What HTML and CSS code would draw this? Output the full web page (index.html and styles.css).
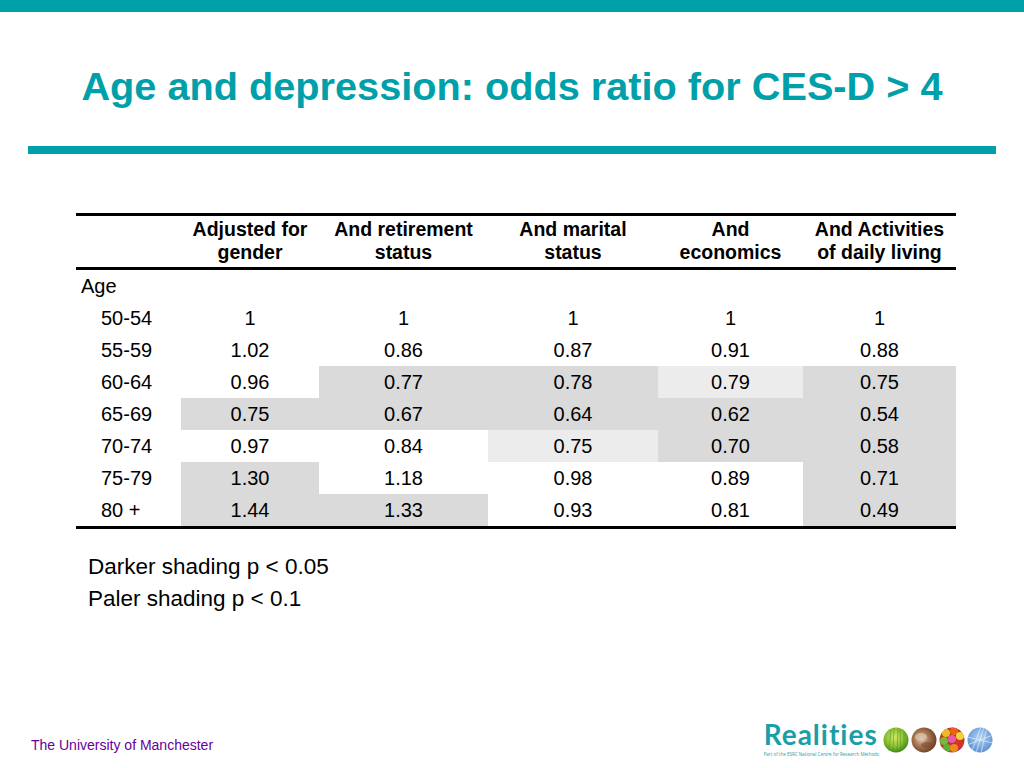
FILE: index.html
```html
<!DOCTYPE html>
<html>
<head>
<meta charset="utf-8">
<link rel="stylesheet" href="styles.css">
</head>
<body>
<div class="slide">
  <div class="topbar"></div>
  <h1 class="title">Age and depression: odds ratio for CES-D &gt; 4</h1>
  <div class="rule"></div>
  <table class="odds">
    <colgroup>
      <col class="c1"><col class="c2"><col class="c3"><col class="c4"><col class="c5"><col class="c6">
    </colgroup>
    <thead>
      <tr>
        <th></th>
        <th>Adjusted for<br>gender</th>
        <th>And retirement<br>status</th>
        <th>And marital<br>status</th>
        <th>And<br>economics</th>
        <th>And Activities<br>of daily living</th>
      </tr>
    </thead>
    <tbody>
      <tr><td class="lab top">Age</td><td></td><td></td><td></td><td></td><td></td></tr>
      <tr><td class="lab">50-54</td><td>1</td><td>1</td><td>1</td><td>1</td><td>1</td></tr>
      <tr><td class="lab">55-59</td><td>1.02</td><td>0.86</td><td>0.87</td><td>0.91</td><td>0.88</td></tr>
      <tr><td class="lab">60-64</td><td>0.96</td><td class="dk">0.77</td><td class="dk">0.78</td><td class="pl">0.79</td><td class="dk">0.75</td></tr>
      <tr><td class="lab">65-69</td><td class="dk">0.75</td><td class="dk">0.67</td><td class="dk">0.64</td><td class="dk">0.62</td><td class="dk">0.54</td></tr>
      <tr><td class="lab">70-74</td><td>0.97</td><td>0.84</td><td class="pl">0.75</td><td class="dk">0.70</td><td class="dk">0.58</td></tr>
      <tr><td class="lab">75-79</td><td class="dk">1.30</td><td>1.18</td><td>0.98</td><td>0.89</td><td class="dk">0.71</td></tr>
      <tr class="last"><td class="lab">80 +</td><td class="dk">1.44</td><td class="dk">1.33</td><td>0.93</td><td>0.81</td><td class="dk">0.49</td></tr>
    </tbody>
  </table>
  <div class="legend">
    <p>Darker shading p &lt; 0.05</p>
    <p>Paler shading p &lt; 0.1</p>
  </div>
  <footer class="footer">
    <span class="uni">The University of Manchester</span>
    <div class="logo">
      <div class="brand">
        <span class="word">Realities</span>
        <span class="tag">Part of the ESRC National Centre for Research Methods</span>
      </div>
      <div class="balls">
        <svg class="ball" viewBox="0 0 26 26" width="26" height="26">
          <defs>
            <radialGradient id="g1" cx="45%" cy="40%" r="60%">
              <stop offset="0" stop-color="#d6ea6a"/>
              <stop offset="0.6" stop-color="#8cc232"/>
              <stop offset="1" stop-color="#3f8a18"/>
            </radialGradient>
          </defs>
          <circle cx="13" cy="13" r="12.5" fill="url(#g1)"/>
          <g stroke="#4e9420" stroke-width="0.8" opacity="0.7">
            <line x1="6" y1="24" x2="8" y2="3"/>
            <line x1="10" y1="25" x2="11" y2="1"/>
            <line x1="14" y1="25" x2="15" y2="2"/>
            <line x1="18" y1="24" x2="17" y2="3"/>
            <line x1="21" y1="22" x2="21" y2="5"/>
          </g>
        </svg>
        <svg class="ball" viewBox="0 0 26 26" width="26" height="26">
          <defs>
            <radialGradient id="g2" cx="40%" cy="45%" r="60%">
              <stop offset="0" stop-color="#e2cdb6"/>
              <stop offset="0.5" stop-color="#a87552"/>
              <stop offset="1" stop-color="#6b3f26"/>
            </radialGradient>
          </defs>
          <circle cx="13" cy="13" r="12.5" fill="url(#g2)"/>
          <ellipse cx="10" cy="10" rx="6" ry="4" fill="#d9c4ae" opacity="0.7"/>
          <ellipse cx="16" cy="18" rx="6" ry="3" fill="#7a4a2c" opacity="0.6"/>
        </svg>
        <svg class="ball" viewBox="0 0 26 26" width="26" height="26">
          <defs>
            <clipPath id="cp3"><circle cx="13" cy="13" r="12.5"/></clipPath>
          </defs>
          <circle cx="13" cy="13" r="12.5" fill="#b83a1e"/>
          <g clip-path="url(#cp3)">
            <circle cx="7" cy="6" r="4" fill="#f2b82a"/>
            <circle cx="15" cy="4" r="4" fill="#e8621c"/>
            <circle cx="21" cy="9" r="4" fill="#f4d23c"/>
            <circle cx="5" cy="14" r="4" fill="#7ab83a"/>
            <circle cx="13" cy="12" r="4" fill="#e85aa8"/>
            <circle cx="20" cy="17" r="4" fill="#d8322a"/>
            <circle cx="8" cy="21" r="4" fill="#5fae3a"/>
            <circle cx="15" cy="21" r="4" fill="#f08a1e"/>
            <circle cx="22" cy="24" r="3" fill="#9a3ab0"/>
          </g>
        </svg>
        <svg class="ball" viewBox="0 0 26 26" width="26" height="26">
          <defs>
            <radialGradient id="g4" cx="50%" cy="40%" r="60%">
              <stop offset="0" stop-color="#b6d4f2"/>
              <stop offset="1" stop-color="#5a92d4"/>
            </radialGradient>
            <clipPath id="cp4"><circle cx="13" cy="13" r="12.5"/></clipPath>
          </defs>
          <circle cx="13" cy="13" r="12.5" fill="url(#g4)"/>
          <g clip-path="url(#cp4)" stroke="#eef6ff" stroke-width="0.7" opacity="0.9">
            <line x1="4" y1="26" x2="14" y2="0"/>
            <line x1="9" y1="26" x2="17" y2="0"/>
            <line x1="14" y1="26" x2="20" y2="0"/>
            <line x1="0" y1="10" x2="26" y2="16"/>
            <line x1="0" y1="18" x2="26" y2="8"/>
          </g>
        </svg>
      </div>
    </div>
  </footer>
</div>
</body>
</html>
```
FILE: styles.css
```css
html, body {
  margin: 0;
  padding: 0;
  background: #ffffff;
}
.slide {
  width: 1024px;
  height: 768px;
  display: flex;
  flex-direction: column;
  font-family: "Liberation Sans", Arial, sans-serif;
  color: #000;
  overflow: hidden;
}
.topbar {
  height: 12px;
  background: #00a0aa;
  flex: none;
}
.title {
  margin: 50px 0 0 0;
  font-size: 39.7px;
  line-height: 48px;
  font-weight: bold;
  color: #00a0aa;
  text-align: center;
}
.rule {
  margin: 36px 0 0 28px;
  width: 968px;
  height: 8px;
  background: #00a0aa;
  flex: none;
}
.odds {
  margin: 59px 0 0 76px;
  width: 880px;
  border-collapse: separate;
  border-spacing: 0;
  table-layout: fixed;
  font-size: 20px;
}
.c1 { width: 105px; }
.c2 { width: 138px; }
.c3 { width: 169px; }
.c4 { width: 170px; }
.c5 { width: 145px; }
.c6 { width: 153px; }
.odds th {
  font-weight: bold;
  font-size: 19.5px;
  line-height: 23px;
  padding: 2px 0 3px 0;
  border-top: 3px solid #000;
  border-bottom: 3px solid #000;
  text-align: center;
  vertical-align: top;
}
.odds td {
  height: 32px;
  padding: 0;
  text-align: center;
  vertical-align: middle;
  line-height: 22px;
}
.odds td.lab {
  text-align: left;
  padding-left: 25px;
}
.odds td.lab.top {
  padding-left: 5px;
}
.odds tr.last td {
  border-bottom: 3px solid #000;
}
.odds td.dk { background: #dadada; }
.odds td.pl { background: #ececec; }
.legend {
  margin: 22px 0 0 88px;
  font-size: 22.5px;
  line-height: 32px;
}
.legend p {
  margin: 0;
}
.footer {
  margin-top: auto;
  display: flex;
  align-items: flex-end;
  justify-content: space-between;
  padding: 0 31px 11px 31px;
}
.uni {
  font-size: 14px;
  line-height: 16px;
  color: #660099;
  margin-bottom: 4px;
}
.logo {
  display: flex;
  align-items: flex-start;
  gap: 4px;
}
.brand {
  display: flex;
  flex-direction: column;
  align-items: flex-start;
}
.word {
  font-family: Lato, "Open Sans", sans-serif;
  font-weight: 700;
  font-size: 28px;
  line-height: 24px;
  color: #1a9ea8;
  letter-spacing: 1px;
}
.tag {
  font-family: "Open Sans", "Liberation Sans", sans-serif;
  font-size: 4.5px;
  line-height: 6px;
  color: #1a9ea8;
  white-space: nowrap;
  margin-top: 5px;
}
.balls {
  display: flex;
  gap: 2px;
  padding-top: 5px;
}
.ball {
  display: block;
}
```
